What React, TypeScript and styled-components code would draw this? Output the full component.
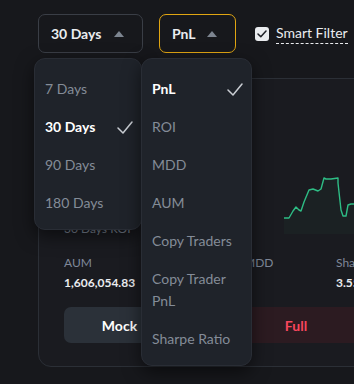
import React from "react";
import styled, { createGlobalStyle } from "styled-components";

const Global = createGlobalStyle`
  html, body { margin: 0; padding: 0; background: #17181c; overflow: hidden; }
  body { font-family: Lato, "Liberation Sans", sans-serif; color: #eaecef; }
  * { box-sizing: border-box; }
`;

const Page = styled.div`
  width: 354px;
  height: 384px;
  padding: 14px 0 0 38px;
  display: flex;
  flex-direction: column;
`;

const TopBar = styled.div`
  display: flex;
  align-items: center;
  position: relative;
  z-index: 2;
`;

const SelectWrap = styled.div<{ $gap?: number }>`
  position: relative;
  margin-right: ${(p) => p.$gap ?? 0}px;
`;

const SelectButton = styled.div<{ $active?: boolean; $w: number }>`
  width: ${(p) => p.$w}px;
  height: 39px;
  border: 1px solid ${(p) => (p.$active ? "#e0a512" : "#3a3e46")};
  border-radius: 7px;
  display: flex;
  align-items: center;
  justify-content: space-between;
  padding: 0 18px 0 12px;
  font-size: 14px;
  font-weight: 700;
  color: #eaecef;
`;

const Caret = styled.span`
  width: 0;
  height: 0;
  border-left: 5px solid transparent;
  border-right: 5px solid transparent;
  border-bottom: 6px solid #7d8590;
`;

const Menu = styled.div<{ $left: number; $w: number }>`
  position: absolute;
  top: 44px;
  left: ${(p) => p.$left}px;
  width: ${(p) => p.$w}px;
  background: #1f232a;
  border: 1px solid #292d35;
  border-radius: 11px;
  padding: 11px 0 7px;
  box-shadow: 0 6px 18px rgba(0, 0, 0, 0.55);
`;

const Item = styled.div<{ $selected?: boolean }>`
  display: flex;
  align-items: center;
  justify-content: space-between;
  padding: 8px 8px 8px 10px;
  font-size: 14px;
  line-height: 22px;
  font-weight: ${(p) => (p.$selected ? 700 : 400)};
  color: ${(p) => (p.$selected ? "#ffffff" : "#848c98")};
`;

const ItemLabel = styled.span`
  max-width: 88px;
`;

const CheckMark = () => (
  <svg width="16" height="13" viewBox="0 0 16 13" fill="none">
    <path d="M1 7 L6 12 L15 1" stroke="#c9cdd3" strokeWidth="1.5" strokeLinecap="round" strokeLinejoin="round" />
  </svg>
);

const FilterToggle = styled.label`
  display: flex;
  align-items: center;
  gap: 7px;
  margin-left: 19px;
`;

const Box = styled.span`
  width: 14px;
  height: 14px;
  border-radius: 3px;
  background: #eaecef;
  display: flex;
  align-items: center;
  justify-content: center;
`;

const FilterText = styled.span`
  font-size: 14px;
  line-height: 18px;
  color: #eaecef;
  border-bottom: 1px dashed #eaecef;
  padding-bottom: 1px;
`;

const Card = styled.div`
  margin-top: 25px;
  width: 397px;
  border: 1px solid #2b2f36;
  border-radius: 13px;
  background: #1a1b20;
  padding: 0 0 23px 25px;
  position: relative;
  z-index: 1;
`;

const ChartRow = styled.div`
  display: flex;
  align-items: flex-start;
  margin-top: 93px;
  height: 65px;
`;

const RoiCol = styled.div`
  width: 220px;
  height: 100%;
  display: flex;
  flex-direction: column;
  justify-content: flex-end;
`;

const Label = styled.div`
  font-size: 12px;
  line-height: 16px;
  color: #7f8899;
`;

const Stats = styled.div`
  display: grid;
  grid-template-columns: 90px 90px 92px 1fr;
  margin-top: 18px;
`;

const Value = styled.div`
  margin-top: 3px;
  font-size: 12px;
  line-height: 18px;
  font-weight: 700;
  color: #eaecef;
`;

const Buttons = styled.div`
  display: flex;
  gap: 8px;
  margin-top: 15px;
  padding-right: 25px;
`;

const ActionButton = styled.div<{ $variant: "mock" | "full" }>`
  height: 36px;
  border-radius: 7px;
  display: flex;
  align-items: center;
  justify-content: center;
  font-size: 14px;
  font-weight: 700;
  flex: ${(p) => (p.$variant === "mock" ? "0 0 111px" : "1")};
  background: ${(p) => (p.$variant === "mock" ? "#2b3139" : "#2c1b21")};
  color: ${(p) => (p.$variant === "mock" ? "#ffffff" : "#f6465d")};
`;

const linePts =
  "0,46 5,46 9,39 12,35 15,38 17,39 20,30 25,18 29,17 34,19 37,17 40,6 42,7 47,7 54,6 54,11 57,38 59,44 62,44 64,33 67,32 72,32";

const Chart = () => (
  <svg width="126" height="62" viewBox="0 0 126 62">
    <polygon points={`${linePts} 72,62 0,62`} fill="rgba(46,189,133,0.035)" />
    <polyline points={linePts} fill="none" stroke="#2ebd85" strokeWidth="1.4" strokeLinejoin="round" />
  </svg>
);

export default function App() {
  return (
    <>
      <Global />
      <Page>
        <TopBar>
          <SelectWrap $gap={16}>
            <SelectButton $w={105}>
              30 Days
              <Caret />
            </SelectButton>
            <Menu $left={-4} $w={108}>
              <Item>7 Days</Item>
              <Item $selected>
                30 Days
                <CheckMark />
              </Item>
              <Item>90 Days</Item>
              <Item>180 Days</Item>
            </Menu>
          </SelectWrap>
          <SelectWrap>
            <SelectButton $active $w={77}>
              PnL
              <Caret />
            </SelectButton>
            <Menu $left={-18} $w={111}>
              <Item $selected>
                PnL
                <CheckMark />
              </Item>
              <Item>ROI</Item>
              <Item>MDD</Item>
              <Item>AUM</Item>
              <Item>Copy Traders</Item>
              <Item>
                <ItemLabel>Copy Trader PnL</ItemLabel>
              </Item>
              <Item>Sharpe Ratio</Item>
            </Menu>
          </SelectWrap>
          <FilterToggle>
            <Box>
              <svg width="10" height="8" viewBox="0 0 10 8" fill="none">
                <path d="M1 4 L3.8 6.8 L9 1" stroke="#1e2026" strokeWidth="1.5" strokeLinecap="round" strokeLinejoin="round" />
              </svg>
            </Box>
            <FilterText>Smart Filter</FilterText>
          </FilterToggle>
        </TopBar>
        <Card>
          <ChartRow>
            <RoiCol>
              <Label>30 Days ROI</Label>
            </RoiCol>
            <Chart />
          </ChartRow>
          <Stats>
            <div>
              <Label>AUM</Label>
              <Value>1,606,054.83</Value>
            </div>
            <div />
            <div>
              <Label>MDD</Label>
              <Value>&nbsp;</Value>
            </div>
            <div>
              <Label>Sharpe Ratio</Label>
              <Value>3.55</Value>
            </div>
          </Stats>
          <Buttons>
            <ActionButton $variant="mock">Mock</ActionButton>
            <ActionButton $variant="full">Full</ActionButton>
          </Buttons>
        </Card>
      </Page>
    </>
  );
}
